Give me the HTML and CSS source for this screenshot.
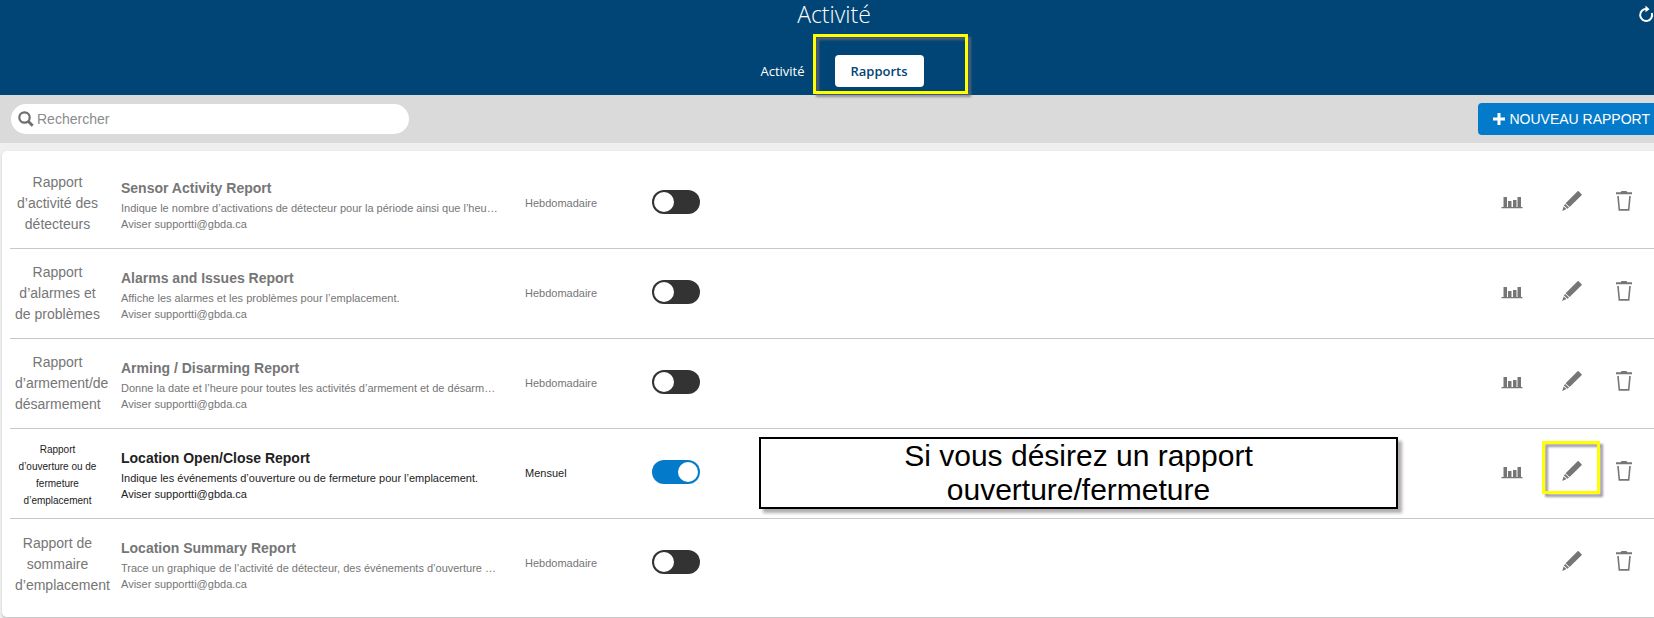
FILE: index.html
```html
<!DOCTYPE html>
<html lang="fr">
<head>
    <meta charset="UTF-8">
    <meta name="viewport" content="width=device-width, initial-scale=1.0">
    <title>Activité - Rapports</title>
    <link rel="stylesheet" href="styles.css">
</head>
<body>
    <svg class="sprite" aria-hidden="true">
        <symbol id="icon-chart" viewBox="0 0 22 14">
            <path d="M0.5 12h21v1.300h-21zM2.500 2h3.500v10h-3.500zM7 6h3.500v6h-3.500zM12 5h3.500v7h-3.500zM16.500 2h3.500v10h-3.500z"/>
        </symbol>
        <symbol id="icon-pencil" viewBox="0 0 20 20">
            <path d="M16.600 0.200l3 3c.3.300.3.700 0 1L7.600 16 3.600 12.300 15.600.2c.3-.3.700-.3 1 0zM3.100 12.900l3.900 3.700-1.600 1.200-3.500-3.300zM1.600 15.400l2.900 2.700L.2 19.900z"/>
        </symbol>
        <symbol id="icon-trash" viewBox="0 0 16 20">
            <path d="M5.500 0h5l.8 1.200H16v2H0v-2h4.700zM1.200 5h1.600l1.200 13h8l1.200-13h1.600l-1.400 14.800H2.600z"/>
        </symbol>
    </svg>

    <header class="header">
        <h1>Activité</h1>
        <button class="refresh" aria-label="Actualiser">
            <svg width="16" height="18" viewBox="0 0 16 18" fill="none" stroke="#fff" stroke-width="2">
                <path d="M8.500 4A6 6 0 1 0 13.800 8"/>
                <path d="M7.500 0.500l4 3.700-4 3z" fill="#fff" stroke="none"/>
            </svg>
        </button>
        <nav class="tabs">
            <a href="#" class="tab">Activité</a>
            <a href="#" class="tab active">Rapports</a>
            <span class="marker marker-tab"></span>
        </nav>
    </header>

    <div class="toolbar">
        <label class="search">
            <svg width="16" height="16" viewBox="0 0 16 16" fill="none" stroke="#6f6f6f">
                <circle cx="6.500" cy="6.500" r="5.200" stroke-width="2.200"/>
                <path d="M10.200 10.200l4.500 4.500" stroke-width="2.800"/>
            </svg>
            <input type="text" placeholder="Rechercher" aria-label="Rechercher">
        </label>
        <button class="new-report">
            <svg width="12" height="12" viewBox="0 0 12 12" fill="#fff"><path d="M4.500 0h3v4.500H12v3H7.500V12h-3V7.500H0v-3h4.500z"/></svg>
            NOUVEAU RAPPORT
        </button>
    </div>

    <main class="panel">
        <table class="reports">
            <colgroup>
                <col class="col-type">
                <col class="col-info">
                <col class="col-freq">
                <col class="col-toggle">
                <col>
                <col class="col-icon">
                <col class="col-icon">
                <col class="col-trash">
            </colgroup>
            <tbody>
                <tr>
                    <td class="type">Rapport<br>d’activité des<br>détecteurs</td>
                    <td class="info">
                        <h2>Sensor Activity Report</h2>
                        <p>Indique le nombre d’activations de détecteur pour la période ainsi que l’heu…</p>
                        <p>Aviser supportti@gbda.ca</p>
                    </td>
                    <td class="freq">Hebdomadaire</td>
                    <td><input type="checkbox" class="toggle" aria-label="Sensor Activity Report"></td>
                    <td></td>
                    <td><button class="icon" aria-label="Graphique"><svg class="chart"><use href="#icon-chart"/></svg></button></td>
                    <td><button class="icon" aria-label="Modifier"><svg class="pencil"><use href="#icon-pencil"/></svg></button></td>
                    <td><button class="icon" aria-label="Supprimer"><svg class="trash"><use href="#icon-trash"/></svg></button></td>
                </tr>
                <tr>
                    <td class="type">Rapport<br>d’alarmes et<br>de problèmes</td>
                    <td class="info">
                        <h2>Alarms and Issues Report</h2>
                        <p>Affiche les alarmes et les problèmes pour l’emplacement.</p>
                        <p>Aviser supportti@gbda.ca</p>
                    </td>
                    <td class="freq">Hebdomadaire</td>
                    <td><input type="checkbox" class="toggle" aria-label="Alarms and Issues Report"></td>
                    <td></td>
                    <td><button class="icon" aria-label="Graphique"><svg class="chart"><use href="#icon-chart"/></svg></button></td>
                    <td><button class="icon" aria-label="Modifier"><svg class="pencil"><use href="#icon-pencil"/></svg></button></td>
                    <td><button class="icon" aria-label="Supprimer"><svg class="trash"><use href="#icon-trash"/></svg></button></td>
                </tr>
                <tr>
                    <td class="type">Rapport<br>d’armement/de<br>désarmement</td>
                    <td class="info">
                        <h2>Arming / Disarming Report</h2>
                        <p>Donne la date et l’heure pour toutes les activités d’armement et de désarm…</p>
                        <p>Aviser supportti@gbda.ca</p>
                    </td>
                    <td class="freq">Hebdomadaire</td>
                    <td><input type="checkbox" class="toggle" aria-label="Arming / Disarming Report"></td>
                    <td></td>
                    <td><button class="icon" aria-label="Graphique"><svg class="chart"><use href="#icon-chart"/></svg></button></td>
                    <td><button class="icon" aria-label="Modifier"><svg class="pencil"><use href="#icon-pencil"/></svg></button></td>
                    <td><button class="icon" aria-label="Supprimer"><svg class="trash"><use href="#icon-trash"/></svg></button></td>
                </tr>
                <tr class="enabled">
                    <td class="type small">Rapport<br>d’ouverture ou de<br>fermeture<br>d’emplacement</td>
                    <td class="info">
                        <h2>Location Open/Close Report</h2>
                        <p>Indique les événements d’ouverture ou de fermeture pour l’emplacement.</p>
                        <p>Aviser supportti@gbda.ca</p>
                    </td>
                    <td class="freq">Mensuel</td>
                    <td><input type="checkbox" class="toggle" aria-label="Location Open/Close Report" checked></td>
                    <td><div class="note">Si vous désirez un rapport<br>ouverture/fermeture</div></td>
                    <td><button class="icon" aria-label="Graphique"><svg class="chart"><use href="#icon-chart"/></svg></button></td>
                    <td><button class="icon" aria-label="Modifier"><svg class="pencil"><use href="#icon-pencil"/></svg><span class="marker marker-edit"></span></button></td>
                    <td><button class="icon" aria-label="Supprimer"><svg class="trash"><use href="#icon-trash"/></svg></button></td>
                </tr>
                <tr>
                    <td class="type">Rapport de<br>sommaire<br>d’emplacement</td>
                    <td class="info">
                        <h2>Location Summary Report</h2>
                        <p>Trace un graphique de l’activité de détecteur, des événements d’ouverture …</p>
                        <p>Aviser supportti@gbda.ca</p>
                    </td>
                    <td class="freq">Hebdomadaire</td>
                    <td><input type="checkbox" class="toggle" aria-label="Location Summary Report"></td>
                    <td></td>
                    <td></td>
                    <td><button class="icon" aria-label="Modifier"><svg class="pencil"><use href="#icon-pencil"/></svg></button></td>
                    <td><button class="icon" aria-label="Supprimer"><svg class="trash"><use href="#icon-trash"/></svg></button></td>
                </tr>
            </tbody>
        </table>
    </main>
</body>
</html>
```
FILE: styles.css
```css
* {
    margin: 0;
    padding: 0;
    box-sizing: border-box;
}

body {
    background: #efefef;
    color: #767676;
    font-family: "Liberation Sans", Arial, sans-serif;
    font-size: 14px;
}

button {
    border: none;
    background: none;
    font-family: inherit;
    cursor: pointer;
}

.sprite {
    position: absolute;
    width: 0;
    height: 0;
}

/* header */
.header {
    position: relative;
    height: 95px;
    padding-left: 14px;
    background: #004575;
    color: white;
    font-family: "Open Sans", "Noto Sans", sans-serif;
    text-align: center;
}

.header h1 {
    font-size: 23px;
    font-weight: 300;
    line-height: 28px;
}

.refresh {
    position: absolute;
    top: 5px;
    right: 0;
    height: 18px;
}

.tabs {
    position: relative;
    display: flex;
    justify-content: center;
    gap: 14px;
    width: 180px;
    margin: 27px auto 0;
}

.tab {
    padding: 0 16px;
    border-radius: 4px;
    color: white;
    font-size: 13px;
    line-height: 32px;
    text-decoration: none;
}

.tab.active {
    background: white;
    color: #004575;
    font-weight: 600;
}

/* toolbar */
.toolbar {
    display: flex;
    justify-content: space-between;
    align-items: center;
    height: 48px;
    padding-left: 11px;
    background: #dadada;
}

.search {
    display: flex;
    align-items: center;
    gap: 3px;
    width: 398px;
    height: 30px;
    padding: 0 7px;
    border-radius: 15px;
    background: white;
}

.search input {
    flex: 1;
    border: none;
    outline: none;
    background: none;
    font-family: inherit;
    font-size: 14px;
}

.search input::placeholder {
    color: #8c8c8c;
}

.new-report {
    display: flex;
    align-items: center;
    gap: 4px;
    height: 32px;
    padding: 0 4px 0 15px;
    border-radius: 4px 0 0 4px;
    background: #047aca;
    color: white;
    font-size: 14px;
}

/* reports list */
.panel {
    margin: 8px 0 0 2px;
    padding: 8px 0 8px 8px;
    border-bottom: 1px solid #c8c8c8;
    border-radius: 5px 0 0 5px;
    background: white;
    box-shadow: 0 1px 2px rgba(0, 0, 0, 0.2);
}

.reports {
    width: 100%;
    table-layout: fixed;
    border-spacing: 0;
    font-size: 11px;
}

.col-type { width: 111px; }
.col-info { width: 404px; }
.col-freq { width: 127px; }
.col-toggle { width: 48px; }
.col-icon { width: 60px; }
.col-trash { width: 52px; }

.reports td {
    height: 90px;
    border-bottom: 1px solid #c8c8c8;
    vertical-align: middle;
}

.reports tr:last-child td {
    border-bottom: none;
}

.enabled {
    color: #222;
}

.reports .type {
    padding: 0 21px 0 5px;
    font-size: 14px;
    line-height: 21px;
    text-align: center;
    white-space: nowrap;
}

.reports .small {
    padding-top: 2px;
    font-size: 10px;
    line-height: 17px;
}

.reports .freq {
    padding-bottom: 2px;
}

.info {
    padding-right: 20px;
}

.info h2 {
    font-size: 14px;
    line-height: 24px;
}

.info p {
    line-height: 16px;
    white-space: nowrap;
}

.toggle {
    appearance: none;
    display: block;
    width: 48px;
    height: 24px;
    margin-bottom: 4px;
    padding: 2px;
    border-radius: 12px;
    background: #333;
    cursor: pointer;
}

.toggle::before {
    content: "";
    display: block;
    width: 20px;
    height: 20px;
    border-radius: 50%;
    background: white;
}

.toggle:checked {
    background: #047aca;
}

.toggle:checked::before {
    margin-left: auto;
}

.icon {
    position: relative;
    display: flex;
    justify-content: center;
    align-items: center;
    width: 60px;
    height: 40px;
    margin-bottom: 6px;
}

td:last-child .icon {
    width: 44px;
}

.icon svg {
    fill: #767676;
}

.chart {
    width: 22px;
    height: 14px;
    margin-top: 2px;
}

.pencil {
    width: 20px;
    height: 20px;
}

.trash {
    width: 16px;
    height: 20px;
}

/* annotations */
.marker {
    position: absolute;
    border: 3px solid #ff0;
    filter: drop-shadow(3px 3px 1px rgba(120, 110, 120, 0.7));
    pointer-events: none;
}

.marker-tab {
    top: -21px;
    right: -44px;
    width: 155px;
    height: 60px;
}

.marker-edit {
    inset: -10px 2px -3px 0;
}

.note {
    margin: 0 84px 2px 59px;
    border: 2px solid #000;
    background: white;
    box-shadow: 4px 4px 3px rgba(60, 50, 60, 0.4);
    color: #000;
    font-size: 30px;
    line-height: 34px;
    text-align: center;
}
```
